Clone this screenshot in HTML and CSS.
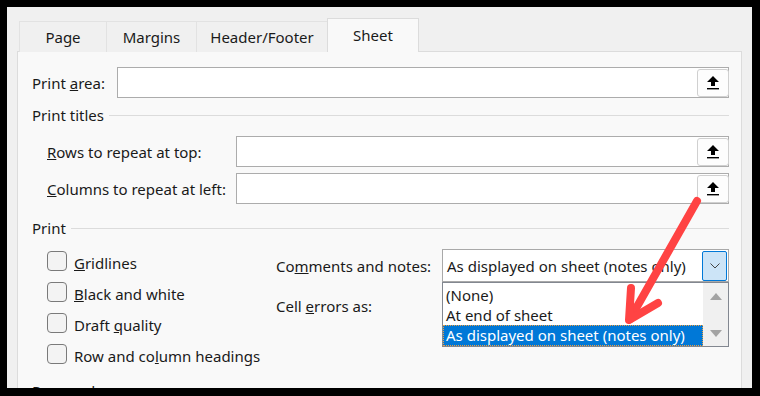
FILE: index.html
```html
<!DOCTYPE html>
<html lang="en">
<head>
    <meta charset="UTF-8">
    <title>Page Setup - Sheet</title>
    <link rel="stylesheet" href="styles.css">
</head>
<body>
    <div class="dialog">
        <div class="tabs">
            <div class="tab tab-page">Page</div>
            <div class="tab tab-margins">Margins</div>
            <div class="tab tab-header">Header/Footer</div>
            <div class="tab tab-sheet active">Sheet</div>
        </div>

        <div class="panel">
            <div class="row area-row">
                <label class="area-label">Print <u>a</u>rea:</label>
                <div class="ref-box">
                    <button class="ref-btn"><svg width="12" height="14" viewBox="0 0 12 14"><polygon points="6,0 12,6 8,6 8,10 4,10 4,6 0,6" fill="#000"/><rect x="0" y="12" width="12" height="1.4" fill="#000"/></svg></button>
                </div>
            </div>

            <div class="group-title"><span>Print titles</span></div>
            <div class="titles">
                <div class="row title-row">
                    <label class="title-label"><u>R</u>ows to repeat at top:</label>
                    <div class="ref-box">
                        <button class="ref-btn"><svg width="12" height="14" viewBox="0 0 12 14"><polygon points="6,0 12,6 8,6 8,10 4,10 4,6 0,6" fill="#000"/><rect x="0" y="12" width="12" height="1.4" fill="#000"/></svg></button>
                    </div>
                </div>
                <div class="row title-row">
                    <label class="title-label"><u>C</u>olumns to repeat at left:</label>
                    <div class="ref-box">
                        <button class="ref-btn"><svg width="12" height="14" viewBox="0 0 12 14"><polygon points="6,0 12,6 8,6 8,10 4,10 4,6 0,6" fill="#000"/><rect x="0" y="12" width="12" height="1.4" fill="#000"/></svg></button>
                    </div>
                </div>
            </div>

            <div class="group-title print-title"><span>Print</span></div>
            <div class="print">
                <div class="checks">
                    <div class="check"><span class="box"></span><span class="check-text"><u>G</u>ridlines</span></div>
                    <div class="check"><span class="box"></span><span class="check-text"><u>B</u>lack and white</span></div>
                    <div class="check"><span class="box"></span><span class="check-text">Draft <u>q</u>uality</span></div>
                    <div class="check"><span class="box"></span><span class="check-text">Row and co<u>l</u>umn headings</span></div>
                </div>
                <div class="options">
                    <div class="option">
                        <label class="option-label">Co<u>m</u>ments and notes:</label>
                        <div class="combo">
                            <span class="combo-text">As displayed on sheet (notes only)</span>
                            <span class="combo-btn"><svg width="10" height="6" viewBox="0 0 10 6"><polyline points="0.5,0.5 5,5 9.5,0.5" fill="none" stroke="#444" stroke-width="1"/></svg></span>
                            <div class="list">
                                <div class="items">
                                    <div class="item">(None)</div>
                                    <div class="item">At end of sheet</div>
                                    <div class="item selected">As displayed on sheet (notes only)</div>
                                </div>
                                <div class="scrollbar">
                                    <svg width="12" height="8" viewBox="0 0 12 8"><polygon points="6,0 12,7 0,7" fill="#a3a3a3"/></svg>
                                    <svg width="12" height="8" viewBox="0 0 12 8"><polygon points="0,0 12,0 6,7" fill="#a3a3a3"/></svg>
                                </div>
                            </div>
                        </div>
                    </div>
                    <div class="option">
                        <label class="option-label">Cell <u>e</u>rrors as:</label>
                    </div>
                </div>
            </div>

            <div class="group-title order-title"><span>Page order</span></div>
        </div>
    </div>

    <!-- annotation arrow -->
    <svg class="callout" width="760" height="396" viewBox="0 0 760 396">
        <g fill="none" stroke="#ff4343" stroke-width="8" stroke-linecap="round" stroke-linejoin="round">
            <line x1="697" y1="201" x2="630" y2="319"/>
            <polyline points="631,288 629,320 658,303"/>
        </g>
    </svg>
</body>
</html>
```

FILE: styles.css
```css
body {
    margin: 0;
    background: #000;
    font-family: 'Noto Sans', 'Open Sans', sans-serif;
    font-size: 15px;
    color: #1a1a1a;
}

.dialog {
    margin: 7px 0 0 7px;
    width: 745px;
    height: 381px;
    background: #f0f0f0;
    overflow: hidden;
}

/* tabs */
.tabs {
    display: flex;
    align-items: flex-end;
    padding: 11px 0 0 12px;
    margin-bottom: -1px;
}

.tab {
    height: 31px;
    line-height: 31px;
    text-align: center;
    background: #f0f0f0;
    border: 1px solid #e2e2e2;
    border-bottom: none;
    box-sizing: border-box;
    margin-right: -1px;
}

.tab-page { width: 88px; }
.tab-margins { width: 91px; }
.tab-header { width: 132px; }
.tab-sheet { width: 92px; }

.tab.active {
    position: relative;
    z-index: 1;
    height: 34px;
    line-height: 32px;
    background: #f9f9f9;
    border-color: #dcdcdc;
}

.panel {
    margin-left: 10px;
    width: 725px;
    height: 400px;
    background: #f9f9f9;
    border: 1px solid #dcdcdc;
    padding: 15px 12px 0 14px;
    box-sizing: border-box;
}

.row {
    display: flex;
    align-items: center;
}

.area-label { width: 85px; }
.title-label { width: 189px; }

.ref-box {
    flex: 1;
    height: 31px;
    background: #fff;
    border: 1px solid #acacac;
    box-sizing: border-box;
    display: flex;
    justify-content: flex-end;
    align-items: center;
}

.ref-btn {
    width: 32px;
    height: 28px;
    margin-right: -1px;
    background: #fdfdfd;
    border: 1px solid #d0d0d0;
    border-radius: 3px;
    display: flex;
    align-items: center;
    justify-content: center;
    padding: 0;
}

.group-title {
    display: flex;
    align-items: center;
    gap: 5px;
    height: 20px;
    margin-top: 7px;
}

.group-title::after {
    content: "";
    flex: 1;
    border-top: 1px solid #dcdcdc;
}

.titles {
    padding-left: 15px;
    margin-top: 11px;
}

.title-row + .title-row {
    margin-top: 6px;
}

.print-title {
    margin-top: 14px;
}

/* print options */
.print {
    display: flex;
    padding-left: 15px;
    margin-top: 11px;
}

.checks {
    width: 229px;
    padding-top: 2px;
    display: flex;
    flex-direction: column;
    gap: 11px;
}

.check {
    display: flex;
    align-items: center;
    height: 20px;
    gap: 7px;
}

.check-text {
    margin-top: 3px;
}

.box {
    width: 20px;
    height: 20px;
    box-sizing: border-box;
    border: 1px solid #7a7a7a;
    border-radius: 4px;
    background: #f3f3f3;
}

.options {
    flex: 1;
}

.option {
    display: flex;
    align-items: center;
    height: 33px;
}

.option + .option {
    margin-top: 7px;
}

.option-label { width: 166px; }

.combo {
    position: relative;
    flex: 1;
    height: 33px;
    box-sizing: border-box;
    border: 1px solid #a9a9a9;
    background: #fff;
    display: flex;
    align-items: center;
    justify-content: space-between;
    padding-left: 4px;
}

.combo-btn {
    width: 25px;
    height: 30px;
    margin-right: 1px;
    box-sizing: border-box;
    border: 1px solid #0078d7;
    border-radius: 2px;
    background: #cce4f7;
    display: flex;
    align-items: center;
    justify-content: center;
}

/* open dropdown list */
.list {
    position: absolute;
    top: 32px;
    left: -1px;
    right: -1px;
    height: 65px;
    box-sizing: border-box;
    border: 1px solid #828790;
    background: #fff;
    display: flex;
}

.items {
    flex: 1;
    padding-top: 2px;
}

.item {
    height: 20px;
    line-height: 20px;
    padding-left: 3px;
}

.item.selected {
    height: 21px;
    background: #0078d7;
    color: #fff;
    outline: 1px dotted #f0a040;
    outline-offset: -1px;
}

.scrollbar {
    width: 25px;
    background: #f0f0f0;
    display: flex;
    flex-direction: column;
    align-items: center;
    justify-content: space-between;
    padding: 10px 0 8px;
    box-sizing: border-box;
}

.order-title {
    margin-top: 17px;
}

.callout {
    position: absolute;
    top: 0;
    left: 0;
}
```
